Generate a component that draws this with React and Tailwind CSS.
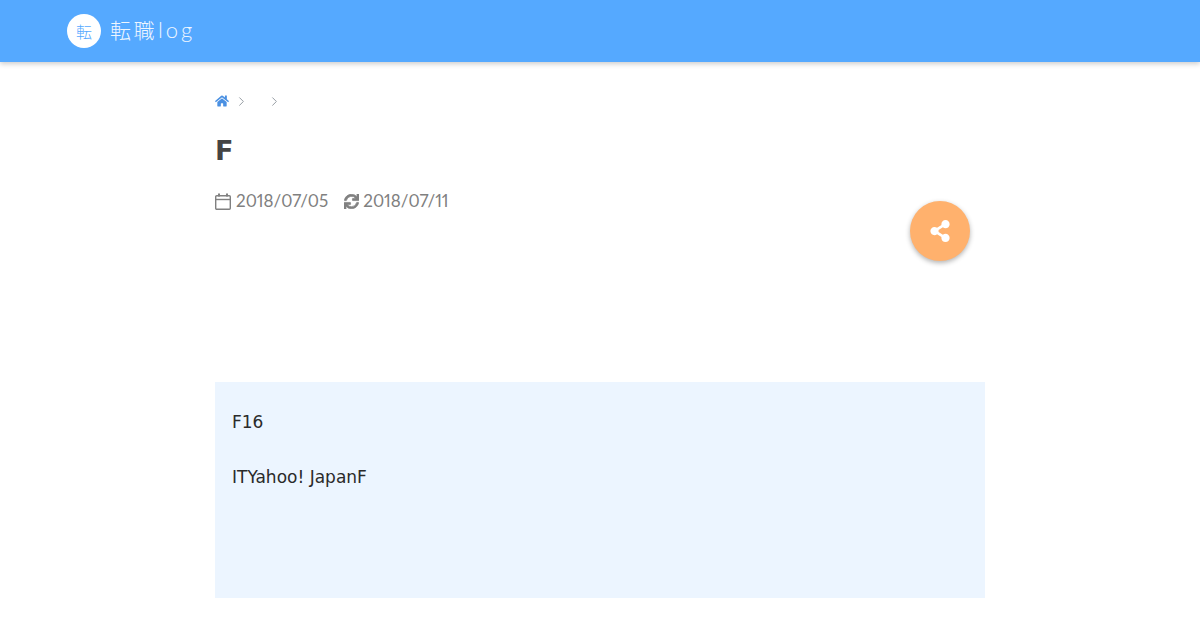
import { FaHome, FaSync, FaShareAlt } from "react-icons/fa";
import { FiChevronRight } from "react-icons/fi";

function CalendarIcon() {
  return (
    <svg viewBox="0 0 16 17" className="h-[17px] w-[16px]" fill="none" stroke="currentColor" strokeWidth="1.4">
      <rect x="0.7" y="2.7" width="14.6" height="13.6" rx="1" />
      <path d="M0.7 6.5h14.6" />
      <path d="M4 0.5v3M12 0.5v3" strokeWidth="2" />
    </svg>
  );
}

export default function App() {
  return (
    <div className="relative h-[630px] w-[1200px] overflow-hidden bg-white font-['DejaVu_Sans',sans-serif]">
      {/* HEADER */}
      <header className="flex h-[62px] items-center bg-[#55a9ff] pl-[67px] shadow-[0_2px_5px_rgba(0,0,0,0.2)]">
        <div className="flex h-[34px] w-[34px] items-center justify-center rounded-full bg-white font-['Noto_Sans_CJK_JP',sans-serif] text-[16px] font-light text-[#55a9ff]">
          転
        </div>
        <div className="ml-[9px] mb-[3px] flex items-center text-[21px] leading-none font-light text-white">
          <span className="font-['Noto_Sans_CJK_JP',sans-serif] font-light tracking-[2.5px] opacity-90">転職</span>
          <span className="ml-[1px] font-['Lato',sans-serif] text-[22px] font-light tracking-[3px] opacity-90">log</span>
        </div>
      </header>

      {/* ARTICLE */}
      <main className="mx-auto w-[770px]">
        <div className="mt-[31px] flex h-[16px] items-center text-[#8f969d]">
          <FaHome className="h-[14px] w-[14px] text-[#4a90e2]" />
          <FiChevronRight className="ml-[5px] h-[15px] w-[15px] stroke-[1.5]" />
          <FiChevronRight className="ml-[18px] h-[15px] w-[15px] stroke-[1.5]" />
        </div>

        <h1 className="mt-[22px] text-[27px] leading-[40px] font-bold text-[#444]">F</h1>

        <div className="mt-[19px] flex h-[22px] items-center font-['Lato',sans-serif] text-[17px] text-[#808080] proportional-nums">
          <CalendarIcon />
          <span className="ml-[5px]">2018/07/05</span>
          <FaSync className="ml-[16px] h-[15px] w-[15px] stroke-[24]" />
          <span className="ml-[4px]">2018/07/11</span>
        </div>

        <section className="mt-[170px] h-[216px] bg-[#ecf5ff] px-[17px] pt-[27px] text-[17px] leading-[27px] text-[#2a2a2a]">
          <p>F16</p>
          <p className="mt-[28px]">ITYahoo! JapanF</p>
        </section>
      </main>

      {/* SHARE BUTTON */}
      <button className="absolute top-[201px] left-[910px] flex h-[60px] w-[60px] items-center justify-center rounded-full bg-[#ffb16d] text-white shadow-[0_2px_5px_rgba(0,0,0,0.3)]">
        <FaShareAlt className="h-[22px] w-[22px]" />
      </button>
    </div>
  );
}
